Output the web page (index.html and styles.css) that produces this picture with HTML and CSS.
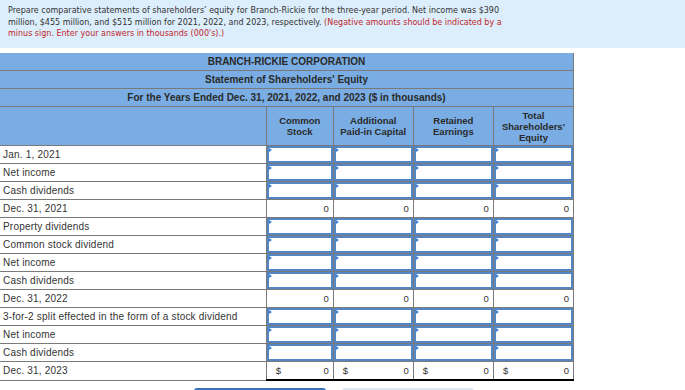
FILE: index.html
```html
<!DOCTYPE html>
<html>
<head>
<meta charset="utf-8">
<link rel="stylesheet" href="styles.css">
</head>
<body>
<div class="prompt">Prepare comparative statements of shareholders’ equity for Branch-Rickie for the three-year period. Net income was $390 million, $455 million, and $515 million for 2021, 2022, and 2023, respectively. <span class="note">(Negative amounts should be indicated by a minus sign. Enter your answers in thousands (000's).)</span></div>
<table class="sheet">
  <colgroup>
    <col class="c-label"><col class="c-cs"><col class="c-v"><col class="c-v"><col class="c-v">
  </colgroup>
  <tr class="title"><th colspan="5">BRANCH-RICKIE CORPORATION</th></tr>
  <tr class="title"><th colspan="5">Statement of Shareholders' Equity</th></tr>
  <tr class="title"><th colspan="5">For the Years Ended Dec. 31, 2021, 2022, and 2023 ($ in thousands)</th></tr>
  <tr class="colhead">
    <th></th>
    <th>Common<br>Stock</th>
    <th>Additional<br>Paid-in Capital</th>
    <th>Retained<br>Earnings</th>
    <th>Total<br>Shareholders'<br>Equity</th>
  </tr>
  <tr class="row"><td class="label">Jan. 1, 2021</td><td class="in"><span class="mark"></span><input></td><td class="in"><span class="mark"></span><input></td><td class="in"><span class="mark"></span><input></td><td class="in"><span class="mark"></span><input></td></tr>
  <tr class="row"><td class="label">Net income</td><td class="in"><span class="mark"></span><input></td><td class="in"><span class="mark"></span><input></td><td class="in"><span class="mark"></span><input></td><td class="in"><span class="mark"></span><input></td></tr>
  <tr class="row"><td class="label">Cash dividends</td><td class="in"><span class="mark"></span><input></td><td class="in"><span class="mark"></span><input></td><td class="in"><span class="mark"></span><input></td><td class="in"><span class="mark"></span><input></td></tr>
  <tr class="row total"><td class="label">Dec. 31, 2021</td><td class="val">0</td><td class="val">0</td><td class="val">0</td><td class="val">0</td></tr>
  <tr class="row"><td class="label">Property dividends</td><td class="in"><span class="mark"></span><input></td><td class="in"><span class="mark"></span><input></td><td class="in"><span class="mark"></span><input></td><td class="in"><span class="mark"></span><input></td></tr>
  <tr class="row"><td class="label">Common stock dividend</td><td class="in"><span class="mark"></span><input></td><td class="in"><span class="mark"></span><input></td><td class="in"><span class="mark"></span><input></td><td class="in"><span class="mark"></span><input></td></tr>
  <tr class="row"><td class="label">Net income</td><td class="in"><span class="mark"></span><input></td><td class="in"><span class="mark"></span><input></td><td class="in"><span class="mark"></span><input></td><td class="in"><span class="mark"></span><input></td></tr>
  <tr class="row"><td class="label">Cash dividends</td><td class="in"><span class="mark"></span><input></td><td class="in"><span class="mark"></span><input></td><td class="in"><span class="mark"></span><input></td><td class="in"><span class="mark"></span><input></td></tr>
  <tr class="row total"><td class="label">Dec. 31, 2022</td><td class="val">0</td><td class="val">0</td><td class="val">0</td><td class="val">0</td></tr>
  <tr class="row"><td class="label">3-for-2 split effected in the form of a stock dividend</td><td class="in"><span class="mark"></span><input></td><td class="in"><span class="mark"></span><input></td><td class="in"><span class="mark"></span><input></td><td class="in"><span class="mark"></span><input></td></tr>
  <tr class="row"><td class="label">Net income</td><td class="in"><span class="mark"></span><input></td><td class="in"><span class="mark"></span><input></td><td class="in"><span class="mark"></span><input></td><td class="in"><span class="mark"></span><input></td></tr>
  <tr class="row"><td class="label">Cash dividends</td><td class="in"><span class="mark"></span><input></td><td class="in"><span class="mark"></span><input></td><td class="in"><span class="mark"></span><input></td><td class="in"><span class="mark"></span><input></td></tr>
  <tr class="row total final"><td class="label">Dec. 31, 2023</td><td class="val"><span class="cur">$</span>0</td><td class="val"><span class="cur">$</span>0</td><td class="val"><span class="cur">$</span>0</td><td class="val"><span class="cur">$</span>0</td></tr>
</table>
<div class="actions"><span class="btn primary"></span><span class="btn secondary"></span></div>
</body>
</html>
```
FILE: styles.css
```css
html, body {
  margin: 0;
  padding: 0;
  background: #fff;
}
body {
  width: 685px;
  height: 390px;
  overflow: hidden;
}
.prompt {
  background: #dcedfb;
  box-sizing: border-box;
  height: 48px;
  padding: 5px 160px 0 8px;
  font-family: "DejaVu Sans", Verdana, sans-serif;
  font-size: 8px;
  line-height: 11.5px;
  color: #333;
}
.note {
  color: #c1272d;
}
.sheet {
  margin-top: 5px;
  border-collapse: collapse;
  table-layout: fixed;
  width: 574px;
  font-family: "Liberation Sans", Arial, sans-serif;
  color: #333;
}
.c-label { width: 266px; }
.c-cs { width: 67px; }
.c-v { width: 80px; }
.title th {
  background: #79ade3;
  height: 17px;
  padding: 0;
  font-size: 10px;
  font-weight: bold;
  text-align: center;
  border-bottom: 1px solid #7a7a7a;
  border-right: 1px solid #7a7a7a;
  color: #2a2a2a;
}
.colhead th {
  background: #79ade3;
  height: 38px;
  padding: 0;
  font-size: 9.5px;
  line-height: 11px;
  font-weight: bold;
  text-align: center;
  border-bottom: 1px solid #7a7a7a;
  border-right: 1px solid #7a7a7a;
  color: #2a2a2a;
}
.row td {
  height: 17px;
  padding: 0;
  border-bottom: 1px solid #7a7a7a;
  border-right: 1px solid #7a7a7a;
  font-size: 10px;
}
.row td.label {
  padding-left: 3px;
  letter-spacing: 0.2px;
  color: #333;
}
.row td.in {
  position: relative;
}
.row td.in input {
  display: block;
  box-sizing: border-box;
  width: 100%;
  height: 17px;
  margin: 0;
  padding: 0;
  border: 2px solid #5486c6;
  background: #fff;
  outline: none;
}
.mark {
  position: absolute;
  left: 2px;
  top: 2px;
  width: 0;
  height: 0;
  border-top: 2px solid transparent;
  border-bottom: 2px solid transparent;
  border-left: 3px solid #3f80d6;
}
.total td.val {
  border-top: 1px solid #000;
  text-align: right;
  padding-right: 4px;
  font-size: 9.5px;
  color: #333;
}
.final td.val {
  border-bottom: 2px solid #000;
}
.cur {
  float: left;
  padding-left: 9px;
}
.actions {
  display: flex;
  gap: 16px;
  margin-top: 7px;
  padding-left: 194px;
}
.btn {
  display: block;
  width: 132px;
  height: 3px;
  border-radius: 3px 3px 0 0;
}
.primary { background: #3a72b9; }
.secondary { background: #dce7f3; }
```
